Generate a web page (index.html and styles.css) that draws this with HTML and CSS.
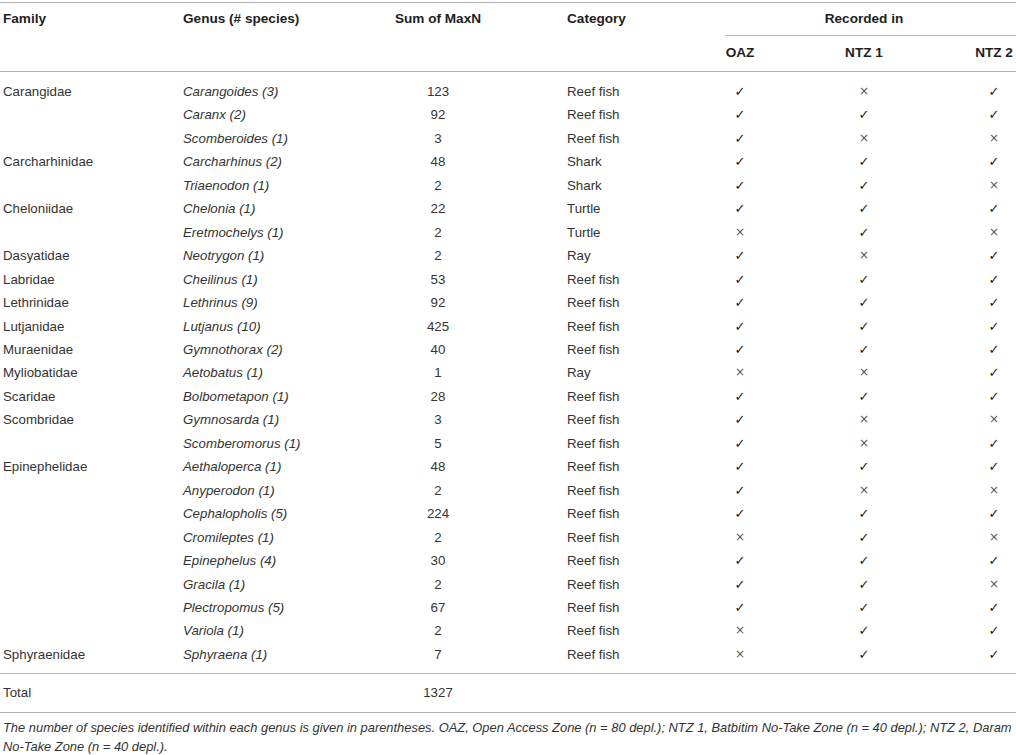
FILE: index.html
```html
<!DOCTYPE html>
<html lang="en">
<head>
<meta charset="utf-8">
<title>Table</title>
<link rel="stylesheet" href="styles.css">
</head>
<body>
<div class="wrap">
<table class="t">
<colgroup>
<col class="w1"><col class="w2"><col class="w3"><col class="w4"><col class="w5"><col class="w6"><col class="w7">
</colgroup>
<thead>
<tr>
<th rowspan="2" class="hl">Family</th>
<th rowspan="2" class="hl">Genus (# species)</th>
<th rowspan="2" class="hc">Sum of MaxN</th>
<th rowspan="2" class="hl hcat">Category</th>
<th colspan="3" class="rec"><div class="rec-in">Recorded in</div></th>
</tr>
<tr>
<th class="sub">OAZ</th>
<th class="sub">NTZ 1</th>
<th class="sub last">NTZ 2</th>
</tr>
</thead>
<tbody class="body">
<tr><td>Carangidae</td><td class="g">Carangoides (3)</td><td class="c">123</td><td class="cat">Reef fish</td><td class="m">✓</td><td class="m x">×</td><td class="m last">✓</td></tr>
<tr><td></td><td class="g">Caranx (2)</td><td class="c">92</td><td class="cat">Reef fish</td><td class="m">✓</td><td class="m">✓</td><td class="m last">✓</td></tr>
<tr><td></td><td class="g">Scomberoides (1)</td><td class="c">3</td><td class="cat">Reef fish</td><td class="m">✓</td><td class="m x">×</td><td class="m x last">×</td></tr>
<tr><td>Carcharhinidae</td><td class="g">Carcharhinus (2)</td><td class="c">48</td><td class="cat">Shark</td><td class="m">✓</td><td class="m">✓</td><td class="m last">✓</td></tr>
<tr><td></td><td class="g">Triaenodon (1)</td><td class="c">2</td><td class="cat">Shark</td><td class="m">✓</td><td class="m">✓</td><td class="m x last">×</td></tr>
<tr><td>Cheloniidae</td><td class="g">Chelonia (1)</td><td class="c">22</td><td class="cat">Turtle</td><td class="m">✓</td><td class="m">✓</td><td class="m last">✓</td></tr>
<tr><td></td><td class="g">Eretmochelys (1)</td><td class="c">2</td><td class="cat">Turtle</td><td class="m x">×</td><td class="m">✓</td><td class="m x last">×</td></tr>
<tr><td>Dasyatidae</td><td class="g">Neotrygon (1)</td><td class="c">2</td><td class="cat">Ray</td><td class="m">✓</td><td class="m x">×</td><td class="m last">✓</td></tr>
<tr><td>Labridae</td><td class="g">Cheilinus (1)</td><td class="c">53</td><td class="cat">Reef fish</td><td class="m">✓</td><td class="m">✓</td><td class="m last">✓</td></tr>
<tr><td>Lethrinidae</td><td class="g">Lethrinus (9)</td><td class="c">92</td><td class="cat">Reef fish</td><td class="m">✓</td><td class="m">✓</td><td class="m last">✓</td></tr>
<tr><td>Lutjanidae</td><td class="g">Lutjanus (10)</td><td class="c">425</td><td class="cat">Reef fish</td><td class="m">✓</td><td class="m">✓</td><td class="m last">✓</td></tr>
<tr><td>Muraenidae</td><td class="g">Gymnothorax (2)</td><td class="c">40</td><td class="cat">Reef fish</td><td class="m">✓</td><td class="m">✓</td><td class="m last">✓</td></tr>
<tr><td>Myliobatidae</td><td class="g">Aetobatus (1)</td><td class="c">1</td><td class="cat">Ray</td><td class="m x">×</td><td class="m x">×</td><td class="m last">✓</td></tr>
<tr><td>Scaridae</td><td class="g">Bolbometapon (1)</td><td class="c">28</td><td class="cat">Reef fish</td><td class="m">✓</td><td class="m">✓</td><td class="m last">✓</td></tr>
<tr><td>Scombridae</td><td class="g">Gymnosarda (1)</td><td class="c">3</td><td class="cat">Reef fish</td><td class="m">✓</td><td class="m x">×</td><td class="m x last">×</td></tr>
<tr><td></td><td class="g">Scomberomorus (1)</td><td class="c">5</td><td class="cat">Reef fish</td><td class="m">✓</td><td class="m x">×</td><td class="m last">✓</td></tr>
<tr><td>Epinephelidae</td><td class="g">Aethaloperca (1)</td><td class="c">48</td><td class="cat">Reef fish</td><td class="m">✓</td><td class="m">✓</td><td class="m last">✓</td></tr>
<tr><td></td><td class="g">Anyperodon (1)</td><td class="c">2</td><td class="cat">Reef fish</td><td class="m">✓</td><td class="m x">×</td><td class="m x last">×</td></tr>
<tr><td></td><td class="g">Cephalopholis (5)</td><td class="c">224</td><td class="cat">Reef fish</td><td class="m">✓</td><td class="m">✓</td><td class="m last">✓</td></tr>
<tr><td></td><td class="g">Cromileptes (1)</td><td class="c">2</td><td class="cat">Reef fish</td><td class="m x">×</td><td class="m">✓</td><td class="m x last">×</td></tr>
<tr><td></td><td class="g">Epinephelus (4)</td><td class="c">30</td><td class="cat">Reef fish</td><td class="m">✓</td><td class="m">✓</td><td class="m last">✓</td></tr>
<tr><td></td><td class="g">Gracila (1)</td><td class="c">2</td><td class="cat">Reef fish</td><td class="m">✓</td><td class="m">✓</td><td class="m x last">×</td></tr>
<tr><td></td><td class="g">Plectropomus (5)</td><td class="c">67</td><td class="cat">Reef fish</td><td class="m">✓</td><td class="m">✓</td><td class="m last">✓</td></tr>
<tr><td></td><td class="g">Variola (1)</td><td class="c">2</td><td class="cat">Reef fish</td><td class="m x">×</td><td class="m">✓</td><td class="m last">✓</td></tr>
<tr><td>Sphyraenidae</td><td class="g">Sphyraena (1)</td><td class="c">7</td><td class="cat">Reef fish</td><td class="m x">×</td><td class="m">✓</td><td class="m last">✓</td></tr>
</tbody>
<tbody class="total">
<tr><td>Total</td><td></td><td class="c">1327</td><td></td><td></td><td></td><td></td></tr>
</tbody>
</table>
<p class="note">The number of species identified within each genus is given in parentheses. OAZ, Open Access Zone (n = 80 depl.); NTZ 1, Batbitim No-Take Zone (n = 40 depl.); NTZ 2, Daram No-Take Zone (n = 40 depl.).</p>
</div>
</body>
</html>
```
FILE: styles.css
```css
html, body {
  margin: 0;
  padding: 0;
  background: #ffffff;
}

body {
  font-family: "Liberation Sans", Arial, sans-serif;
  font-size: 13.3px;
  color: #333333;
}

.wrap {
  padding-top: 2px;
  width: 1016px;
}

.t {
  width: 1016px;
  table-layout: fixed;
  border-collapse: separate;
  border-spacing: 0;
  border-top: 1px solid #b4b4b4;
}

.w1 { width: 180px; }
.w2 { width: 180px; }
.w3 { width: 156px; }
.w4 { width: 164px; }
.w5 { width: 120px; }
.w6 { width: 128px; }
.w7 { width: 88px; }

th {
  font-weight: bold;
  font-size: 13.6px;
  color: #1e1e1e;
  line-height: 16px;
  vertical-align: top;
  padding: 8px 0 0 3px;
  border-bottom: 1px solid #b4b4b4;
  text-align: left;
  white-space: nowrap;
}

th.hc {
  text-align: center;
  padding-left: 0;
}

th.hcat {
  padding-left: 51px;
}

th.rec {
  padding: 0;
  border-bottom: none;
  text-align: center;
}

.rec-in {
  margin-left: 45px;
  padding: 8px 13px 8px 0;
  border-bottom: 1px solid #b4b4b4;
}

th.sub {
  text-align: center;
  padding: 9px 0 10px 0;
}

th.last, td.last {
  padding-left: 44px;
}

td {
  padding: 0 0 0 3px;
  line-height: 23.45px;
  height: 23.45px;
  vertical-align: middle;
  white-space: nowrap;
}

td.g {
  font-style: italic;
}

td.c {
  text-align: center;
  padding-left: 0;
}

td.cat {
  padding-left: 51px;
}

td.m {
  text-align: center;
  padding-left: 0;
  font-family: "DejaVu Sans", sans-serif;
  font-size: 13px;
  color: #1a1a1a;
}

td.m.last {
  padding-left: 44px;
}

td.m.x {
  font-size: 12px;
  color: #555555;
}

.body tr:first-child td {
  padding-top: 8px;
}

.body tr:last-child td {
  padding-bottom: 7px;
  border-bottom: 1px solid #b4b4b4;
}

.total td {
  line-height: 16px;
  height: 16px;
  padding-top: 11px;
  padding-bottom: 11px;
  border-bottom: 1px solid #b4b4b4;
}

.note {
  margin: 5px 0 0 0;
  padding-left: 3px;
  font-style: italic;
  font-size: 12.9px;
  line-height: 19px;
  color: #333333;
}
```
